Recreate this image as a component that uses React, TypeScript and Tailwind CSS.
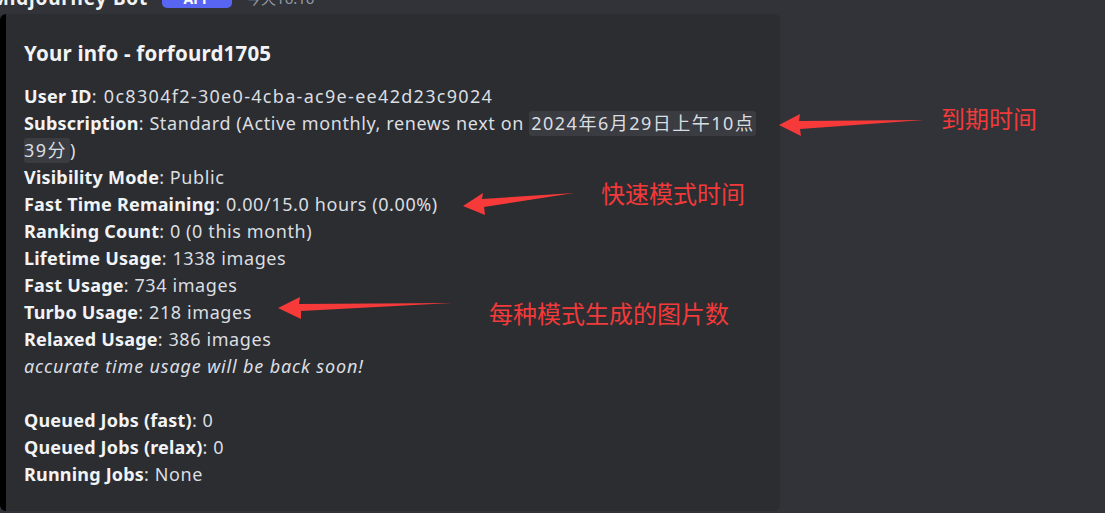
import React from "react";

const Row = ({ label, value, tr = "tracking-[0.6px]" }: { label: string; value: React.ReactNode; tr?: string }) => (
  <div className="h-[27px] leading-[27px] whitespace-nowrap">
    <span className="font-bold text-[#f2f3f5] tracking-[0.2px]">{label}</span>
    <span className={tr}>: {value}</span>
  </div>
);

export default function App() {
  return (
    <div
      className="relative w-[1105px] h-[513px] overflow-hidden bg-[#313338] text-[#dbdee1]"
      style={{ fontFamily: '"Noto Sans", "Noto Sans CJK SC", sans-serif' }}
    >
      {/* header (cut off at top) */}
      <div className="flex items-center h-[24px] -mt-[14px] -ml-[9px]">
        <span className="text-[19px] font-bold text-[#f2f3f5] leading-[24px] tracking-[0.8px]">Midjourney Bot</span>
        <span className="ml-[14px] h-[20px] w-[70px] rounded-[5px] bg-[#5865f2] text-white text-[14px] font-bold flex items-center justify-center">
          APP
        </span>
        <span className="ml-[14px] text-[15px] text-[#949ba4]">今天16:16</span>
      </div>

      {/* embed */}
      <div className="w-[780px] h-[497px] mt-[4px] bg-[#2b2d31] border-l-[6px] border-black rounded-[6px] pl-[18px] pt-[26px]">
        <div className="text-[20.5px] font-bold text-[#f2f3f5] leading-[26px] tracking-[0.2px]">Your info - forfourd1705</div>
        <div className="mt-[17px] text-[18px]">
          <Row label="User ID" value="0c8304f2-30e0-4cba-ac9e-ee42d23c9024" tr="tracking-[1.3px]" />
          <div className="h-[27px] leading-[27px] whitespace-nowrap">
            <span className="font-bold text-[#f2f3f5] tracking-[0.2px]">Subscription</span>
            <span className="tracking-[0.6px]">: Standard (Active monthly, renews next on </span>
            <span className="inline-block h-[25px] leading-[25px] px-[2px] rounded-[3px] bg-[#3a3c42] tracking-[1.5px]">
              2024年6月29日上午10点
            </span>
          </div>
          <div className="h-[27px] leading-[27px] whitespace-nowrap">
            <span className="inline-block h-[25px] leading-[25px] pr-[3px] rounded-[3px] bg-[#3a3c42] tracking-[1.5px]">39分</span>
            <span>)</span>
          </div>
          <Row label="Visibility Mode" value="Public" />
          <Row label="Fast Time Remaining" value="0.00/15.0 hours (0.00%)" />
          <Row label="Ranking Count" value="0 (0 this month)" />
          <Row label="Lifetime Usage" value="1338 images" />
          <Row label="Fast Usage" value="734 images" />
          <Row label="Turbo Usage" value="218 images" />
          <Row label="Relaxed Usage" value="386 images" />
          <div className="h-[27px] leading-[27px] italic tracking-[0.85px]">accurate time usage will be back soon!</div>
          <div className="h-[27px]" />
          <Row label="Queued Jobs (fast)" value="0" />
          <Row label="Queued Jobs (relax)" value="0" />
          <Row label="Running Jobs" value="None" />
        </div>
      </div>

      {/* annotations */}
      <svg className="absolute left-0 top-0 pointer-events-none" width="1105" height="513" viewBox="0 0 1105 513">
        <polygon points="779,125 800,114 799,121 924,120 800,129 801,136" fill="#f63a3a" />
        <polygon points="463,206 483,193 482,199 574,193 484,207 485,215" fill="#f63a3a" />
        <polygon points="278,308 300,297 299,304 452,303 301,311 301,319" fill="#f63a3a" />
      </svg>
      <div className="absolute left-[941px] top-[104px] text-[24px] leading-[28px] text-[#f23a3a]" style={{ fontFamily: '"Noto Sans CJK SC", sans-serif' }}>到期时间</div>
      <div className="absolute left-[601px] top-[179px] text-[24px] leading-[28px] text-[#f23a3a]" style={{ fontFamily: '"Noto Sans CJK SC", sans-serif' }}>快速模式时间</div>
      <div className="absolute left-[489px] top-[299px] text-[24px] leading-[28px] text-[#f23a3a]" style={{ fontFamily: '"Noto Sans CJK SC", sans-serif' }}>每种模式生成的图片数</div>
    </div>
  );
}
